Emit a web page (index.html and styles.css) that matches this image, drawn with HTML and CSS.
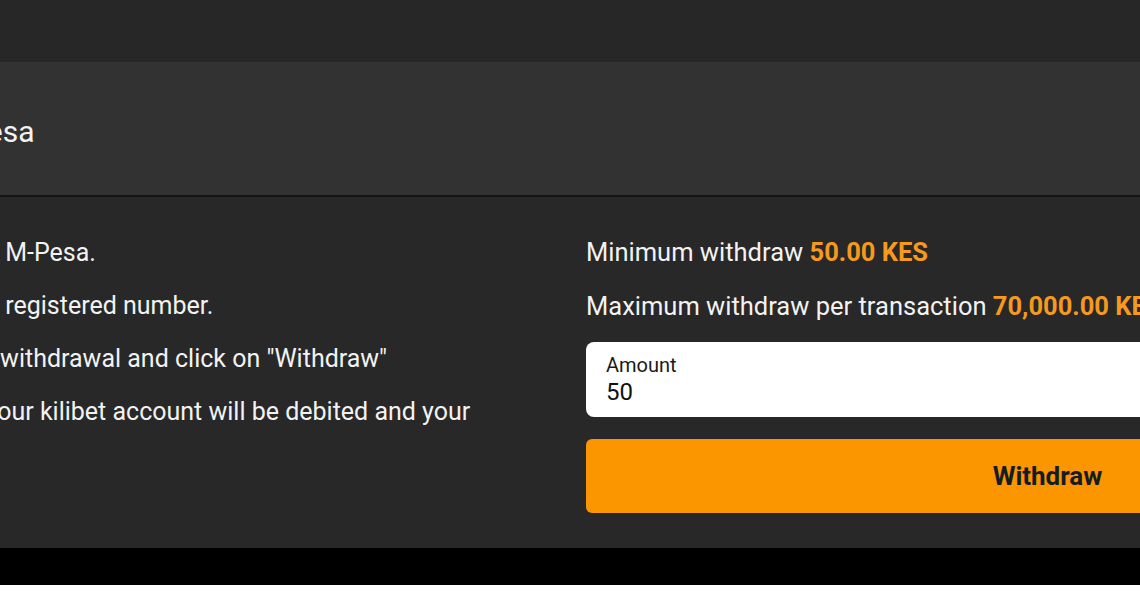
FILE: index.html
```html
<!DOCTYPE html>
<html>
<head>
<meta charset="UTF-8">
<link rel="stylesheet" href="styles.css">
<title>Withdraw</title>
</head>
<body>
<div class="topbar"></div>

<div class="panel-head">
  <h2 class="panel-title">Withdraw via M-Pesa</h2>
</div>

<div class="panel-body">
  <ol class="steps">
    <li>1. Withdraw funds via M-Pesa.</li>
    <li>2. Money gets to your registered number.</li>
    <li>3. Set the amount for withdrawal and click on "Withdraw"</li>
    <li>4. The amount from your kilibet account will be debited and your</li>
  </ol>

  <div class="limits">
    <p class="limit">Minimum withdraw <b class="hl">50.00 KES</b></p>
    <p class="limit">Maximum withdraw per transaction <b class="hl">70,000.00 KES</b></p>

    <label class="amount-field">
      <span class="amount-label">Amount</span>
      <input class="amount-input" type="text" value="50">
    </label>

    <button class="withdraw-btn" type="button">Withdraw</button>
  </div>
</div>

<div class="footer"></div>
</body>
</html>
```

FILE: styles.css
```css
html, body {
  margin: 0;
  overflow: hidden;
}
body {
  background-color: #fff;
  font-family: Roboto, "Liberation Sans", sans-serif;
  color: #f2f2f2;
}

.topbar {
  height: 62px;
  background-color: #272727;
}

.panel-head {
  height: 135px;
  padding-top: 6px;
  box-sizing: border-box;
  display: flex;
  align-items: center;
  background-color: #323232;
  border-bottom: 2px solid #141414;
}
.panel-title {
  margin: 0 0 0 -245px;
  font-size: 30px;
  font-weight: 400;
  white-space: nowrap;
}

.panel-body {
  display: flex;
  height: 351px;
  box-sizing: border-box;
  background-color: #282828;
}

.steps {
  list-style: none;
  flex: none;
  width: 826px;
  margin: 0 0 0 -240px;
  padding: 29px 0 0 0;
  font-size: 25px;
  line-height: 53px;
  white-space: nowrap;
}

.limits {
  flex: none;
  width: 923px;
  padding-top: 28px;
}
.limit {
  margin: 0;
  font-size: 25.5px;
  line-height: 54px;
  white-space: nowrap;
}
.hl {
  color: #f59a1e;
  font-weight: 700;
}

.amount-field {
  display: flex;
  flex-direction: column;
  height: 75px;
  box-sizing: border-box;
  margin-top: 9px;
  padding: 12px 20px 0 20px;
  background-color: #fff;
  border-radius: 8px;
}
.amount-label {
  font-size: 20px;
  line-height: 22px;
  color: #1a1a1a;
}
.amount-input {
  margin-top: 2px;
  padding: 0;
  border: none;
  outline: none;
  background: transparent;
  font-family: inherit;
  font-size: 24px;
  line-height: 28px;
  color: #111;
}

.withdraw-btn {
  display: block;
  width: 100%;
  height: 74px;
  margin-top: 22px;
  border: none;
  border-radius: 6px;
  background-color: #fb9500;
  font-family: inherit;
  font-size: 26px;
  font-weight: 700;
  color: #151c28;
  cursor: pointer;
}

.footer {
  height: 37px;
  background-color: #000;
}
```
